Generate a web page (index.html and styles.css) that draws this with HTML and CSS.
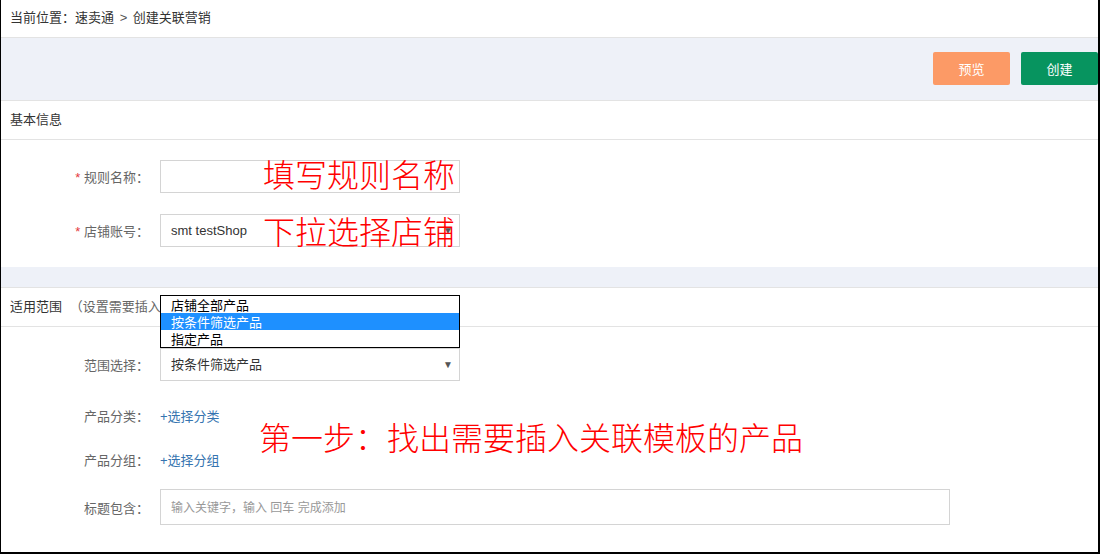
FILE: index.html
```html
<!DOCTYPE html>
<html lang="zh-CN">
<head>
    <meta charset="UTF-8" />
    <title>创建关联营销</title>
    <link rel="stylesheet" href="styles.css">
</head>
<body>
<div class="page">
    <div class="crumb">当前位置：速卖通 <span class="sep">&gt;</span> 创建关联营销</div>

    <div class="toolbar">
        <button class="btn btn-preview">预览</button>
        <button class="btn btn-create">创建</button>
    </div>

    <div class="section">
        <div class="section-title">基本信息</div>
        <div class="form form-basic">
            <div class="row">
                <label class="label"><span class="req">*</span> 规则名称：</label>
                <div class="field"><input type="text" class="input"></div>
            </div>
            <div class="row">
                <label class="label"><span class="req">*</span> 店铺账号：</label>
                <div class="field">
                    <div class="input select">smt testShop<span class="caret">▼</span></div>
                </div>
            </div>
            <div class="note note-name">填写规则名称</div>
            <div class="note note-shop">下拉选择店铺</div>
        </div>
    </div>

    <div class="band"></div>

    <div class="section">
        <div class="section-title">适用范围 <span class="hint">（设置需要插入关联模板的产品）</span></div>
        <div class="form form-scope">
            <div class="row row-select">
                <label class="label">范围选择：</label>
                <div class="field">
                    <div class="input select">按条件筛选产品<span class="caret">▼</span></div>
                    <ul class="options">
                        <li>店铺全部产品</li>
                        <li class="active">按条件筛选产品</li>
                        <li>指定产品</li>
                    </ul>
                </div>
            </div>
            <div class="row row-link">
                <label class="label">产品分类：</label>
                <a class="link" href="#">+选择分类</a>
            </div>
            <div class="row row-link">
                <label class="label">产品分组：</label>
                <a class="link" href="#">+选择分组</a>
            </div>
            <div class="row row-title">
                <label class="label">标题包含：</label>
                <div class="field field-wide"><input type="text" class="input" placeholder="输入关键字，输入 回车 完成添加"></div>
            </div>
            <div class="note note-step">第一步：找出需要插入关联模板的产品</div>
        </div>
    </div>
</div>
</body>
</html>
```

FILE: styles.css
```css
* {
    box-sizing: border-box;
}

body {
    margin: 0;
    font-family: "Liberation Sans", "Noto Sans CJK SC", sans-serif;
    font-size: 13px;
    color: #333;
    background: #fff;
}

.page {
    width: 1100px;
    height: 554px;
    overflow: hidden;
    position: relative;
    border-left: 1px solid #000;
    border-right: 2px solid #000;
    border-bottom: 2px solid #000;
}

.crumb {
    height: 38px;
    line-height: 36px;
    padding-left: 9px;
    border-bottom: 1px solid #e3e3e3;
    color: #333;
}

.crumb .sep {
    color: #555;
    margin: 0 2px;
}

.toolbar {
    height: 63px;
    background: #eef1f8;
    border-bottom: 1px solid #e3e3e3;
    display: flex;
    justify-content: flex-end;
    align-items: flex-start;
    padding-top: 14px;
    gap: 11px;
}

.btn {
    width: 77px;
    height: 33px;
    border: none;
    border-radius: 2px;
    color: #fff;
    font-family: "Noto Sans CJK SC", sans-serif;
    font-size: 13px;
}

.btn-preview {
    background: #fc9a66;
}

.btn-create {
    background: #07945f;
}

.section-title {
    height: 39px;
    line-height: 37px;
    padding-left: 9px;
    border-bottom: 1px solid #e3e3e3;
    color: #333;
}

.hint {
    color: #666;
    margin-left: 4px;
}

.form {
    position: relative;
    display: flex;
    flex-direction: column;
}

.form-basic {
    padding: 20px 0 20px;
    gap: 21px;
}

.row {
    display: flex;
    align-items: center;
}

.label {
    width: 148px;
    margin-right: 11px;
    text-align: right;
    color: #666;
}

.req {
    color: #e4393c;
}

.field {
    position: relative;
    width: 300px;
}

.field-wide {
    width: 790px;
}

.input {
    display: block;
    width: 100%;
    height: 33px;
    border: 1px solid #d4d4d4;
    padding: 0 10px;
    font-family: "Liberation Sans", "Noto Sans CJK SC", sans-serif;
    font-size: 13px;
    color: #333;
    outline: none;
}

.input::placeholder {
    color: #999;
    font-size: 12px;
}

.select {
    line-height: 31px;
    position: relative;
}

.caret {
    position: absolute;
    right: 6px;
    top: 0;
    font-size: 10px;
    color: #555;
}

.band {
    height: 21px;
    background: #eef1f8;
    border-bottom: 1px solid #e3e3e3;
}

.row-select {
    margin-top: 21px;
}

.row-link {
    height: 32px;
    margin-top: 18px;
}

.row-link + .row-link {
    margin-top: 12px;
}

.row-title {
    margin-top: 14px;
}

.row-title .input {
    height: 36px;
}

.link {
    color: #3574b0;
    text-decoration: none;
}

.options {
    position: absolute;
    left: 0;
    bottom: 100%;
    width: 100%;
    margin: 0;
    padding: 0;
    list-style: none;
    border: 1px solid #000;
    background: #fff;
}

.options li {
    height: 17px;
    line-height: 17px;
    padding-left: 10px;
    color: #000;
    font-family: "Noto Sans CJK SC", sans-serif;
    font-size: 13px;
}

.options li.active {
    background: #1e90ff;
    color: #fff;
}

.note {
    position: absolute;
    color: #f00;
    font-family: "Noto Sans CJK SC", sans-serif;
    font-weight: 300;
    font-size: 32px;
    line-height: 36px;
    white-space: nowrap;
}

.note-name {
    left: 262px;
    top: 15px;
}

.note-shop {
    left: 262px;
    top: 72px;
}

.note-step {
    left: 258px;
    top: 91px;
}
```
